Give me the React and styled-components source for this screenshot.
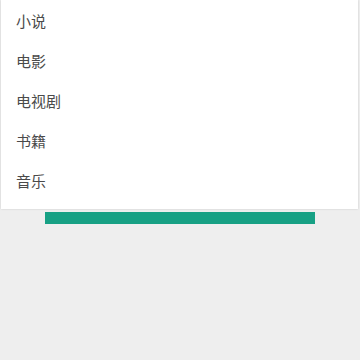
import React from "react";
import styled, { createGlobalStyle } from "styled-components";

const GlobalStyle = createGlobalStyle`
  html, body {
    margin: 0;
    padding: 0;
    background: #eeeeee;
    font-family: "Noto Sans CJK SC", "Noto Sans", sans-serif;
  }
`;

const items = ["小说", "电影", "电视剧", "书籍", "音乐"];

export default function App() {
  return (
    <Page>
      <GlobalStyle />
      <Menu>
        {items.map((item) => (
          <MenuItem key={item}>{item}</MenuItem>
        ))}
      </Menu>
      <Bar />
    </Page>
  );
}

const Page = styled.div`
  width: 360px;
  height: 360px;
  display: flex;
  flex-direction: column;
  align-items: flex-start;
`;

const Menu = styled.ul`
  list-style: none;
  margin: 0 0 0 1px;
  padding: 0 0 9px;
  width: 357px;
  background: #ffffff;
  box-shadow: 0 0 2px rgba(0, 0, 0, 0.15);
`;

const MenuItem = styled.li`
  height: 40px;
  display: flex;
  align-items: center;
  padding-left: 15px;
  font-size: 15px;
  color: #4a4a4a;
`;

const Bar = styled.div`
  margin: 3px 0 0 45px;
  width: 270px;
  height: 12px;
  background: #17a084;
`;
